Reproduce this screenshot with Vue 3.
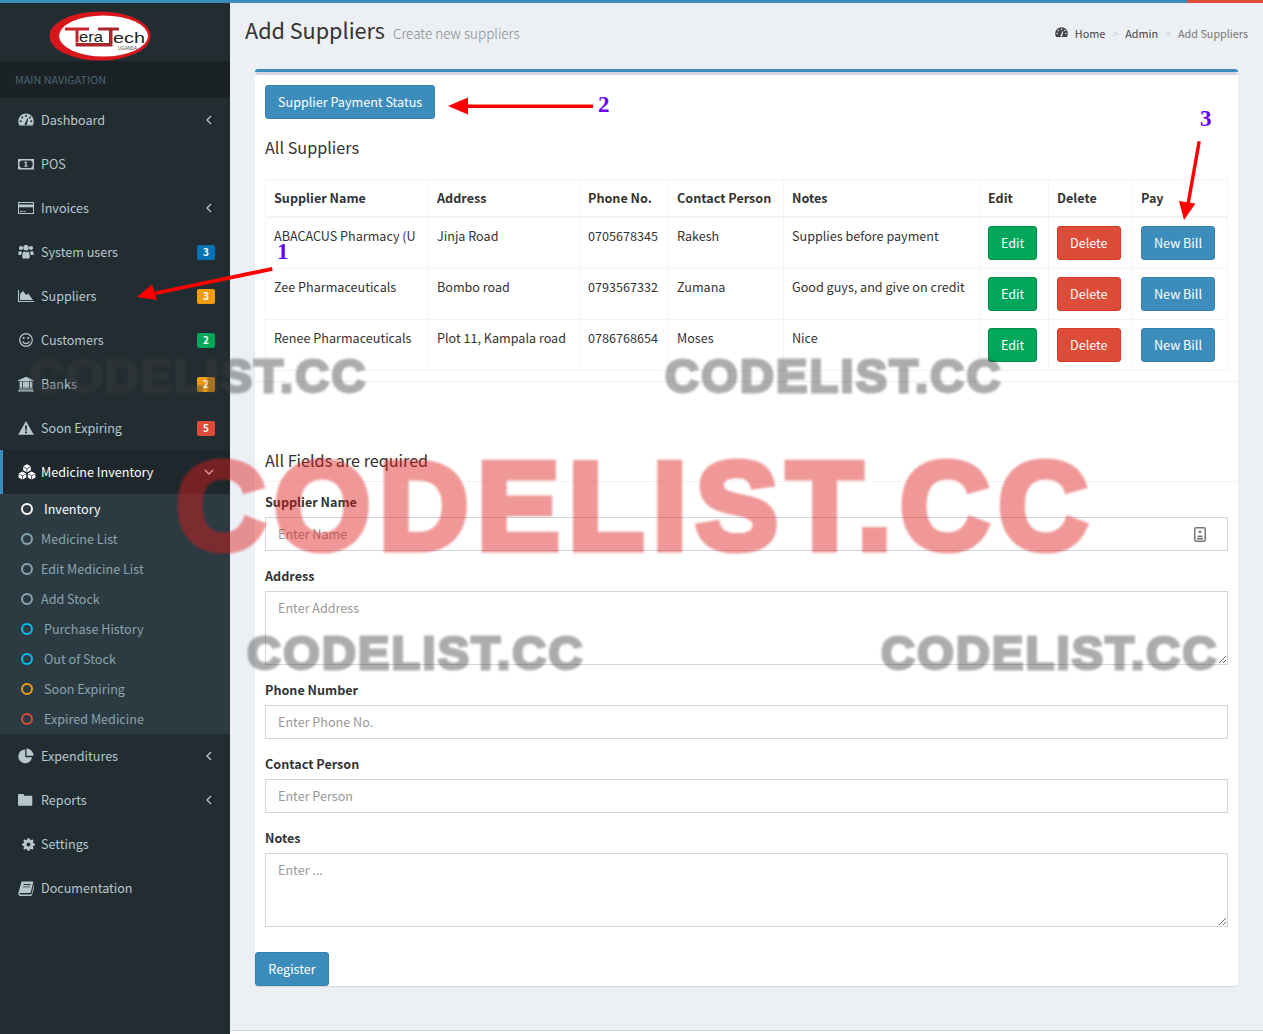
<script setup>
const circle = (x, y, r) => `M${x - r} ${y}a${r} ${r} 0 1 0 ${2 * r} 0a${r} ${r} 0 1 0 ${-2 * r} 0z`

const gear = (cx, cy, outer, inner, hole) => {
  const pts = []
  for (let i = 0; i < 8; i++) {
    const a = (i * Math.PI) / 4
    for (const [off, rad] of [[-0.3, inner], [-0.17, outer], [0.17, outer], [0.3, inner]]) {
      pts.push(`${(cx + rad * Math.cos(a + off)).toFixed(2)} ${(cy + rad * Math.sin(a + off)).toFixed(2)}`)
    }
  }
  return `M${pts.join('L')}z${circle(cx, cy, hole)}`
}

const cube = (x, y, s) => {
  const w = s * 0.95
  const h = s * 0.5
  return `M${x} ${y - s}L${x + w} ${y - s + h}L${x} ${y}L${x - w} ${y - s + h}z` +
    `M${x - w} ${y - s + h + 0.7}L${x - 0.35} ${y + 0.5}V${y + s}L${x - w} ${y + s - h}z` +
    `M${x + w} ${y - s + h + 0.7}L${x + 0.35} ${y + 0.5}V${y + s}L${x + w} ${y + s - h}z`
}

const icons = {
  dashboard: 'M8 1.500A7.800 7.800 0 0 0 .2 9.300c0 1.500.4 3 1.200 4.200h13.200c.8-1.200 1.200-2.700 1.200-4.200A7.800 7.800 0 0 0 8 1.500z' +
    circle(2.7, 9.3, 1) + circle(4.2, 5.6, 1) + circle(8, 4, 1) + circle(12, 5.6, 1) + circle(13.3, 9.3, 1) +
    'M6.800 11.800l2.600-5.600.9.4-1.600 6.400h-1.900z',
  pos: 'M0 3h16v10.400H0zM3 4.400h10l1.600 2v3.600l-1.600 2H3l-1.600-2V6.400zM7 5.600h1.700v4.200h1v1H6.200v-1h1V7H6.200z',
  card: 'M0 2h16v12H0zM1 3v1.600h14V3zM1 7.200V13h14V7.200zM2 11h2.600v1H2zM5.400 11h2v1h-2z',
  users: circle(3, 4, 2.1) + circle(13, 4, 2.1) + circle(8, 3.8, 2.7) +
    'M.2 10.500c0-2 .7-3.600 2-3.600.5.7 1.200 1 2 1-.6.8-.9 1.700-.9 3H1.200c-.6 0-1-.1-1-.4zM15.800 10.500c0-2-.7-3.600-2-3.600-.5.7-1.200 1-2 1 .6.8.9 1.700.9 3h2.100c.6 0 1-.1 1-.4zM4.200 13c0-3.200.8-5.600 2-5.600.5.5 1.100.8 1.800.8s1.300-.3 1.800-.8c1.200 0 2 2.400 2 5.600 0 1-.7 1.500-1.600 1.500H5.800c-.9 0-1.600-.5-1.600-1.500z',
  area: 'M0 2h1v11h15v1H0zM2 12V6l3-3 3.200 4 2-1.600L15 12z',
  smile: circle(8, 8, 6.9) + circle(8, 8, 5.7) + circle(5.7, 6, 1) + circle(10.3, 6, 1) +
    'M4.200 9.400l1-.3c.5 1.300 1.600 2 2.800 2s2.300-.7 2.800-2l1 .3c-.6 1.800-2.100 2.800-3.800 2.800s-3.200-1-3.800-2.800z',
  bank: 'M8 .8l7.800 3.400v1H.2v-1zM1.600 5.800H4v6H1.600zM4.800 5.800h2v6h-2zM9.200 5.800h2v6h-2zM12 5.800h2.400v6H12zM6.900 5.800h2.200v6H6.900zM1 12.400h14v1.200H1zM.2 14.200h15.600v1.300H.2z',
  warning: 'M8 1l7.800 13.800H.2zM7 5.600l.3 5h1.400l.3-5zM7 11.500v1.800h2v-1.800z',
  cubes: cube(9, 4.2, 4) + cube(4.4, 11.4, 4) + cube(13.6, 11.4, 4),
  pie: 'M7.200 1.400A6.900 6.900 0 1 0 14 9.200H7.200zM8.500 .6v7.200h7.100A7.200 7.200 0 0 0 8.500 .6z',
  folder: 'M0 3.400c0-.8.5-1.300 1.300-1.300h3.400c.8 0 1.300.5 1.300 1.300v.4h7c.8 0 1.300.5 1.300 1.300v7.400c0 .8-.5 1.300-1.300 1.300H1.300c-.8 0-1.300-.5-1.300-1.300z',
  gear: gear(8, 8, 7.9, 6, 2.4),
  book: 'M3.600 1.400h10.800c.6 0 .9.4.8 1l-2.400 9.500c-.2.8-.7 1.200-1.500 1.200H2.400c-.6 0-.9.3-.9.7s.4.7.9.7h10.400c.4 0 .6-.2.7-.5l2.300-9 .7.5-2.400 9.200c-.2.9-.8 1.300-1.600 1.300H2.200C1 15.500 0 14.700.3 13.200zM5.600 4l-.2.9h7.200l.2-.9zM5 6.400l-.2.9H12l.2-.9z',
}

const navTop = [
  { label: 'Dashboard', icon: 'dashboard', arrow: true },
  { label: 'POS', icon: 'pos' },
  { label: 'Invoices', icon: 'card', arrow: true },
  { label: 'System users', icon: 'users', badge: 3, color: '#0073b7' },
  { label: 'Suppliers', icon: 'area', badge: 3, color: '#f39c12' },
  { label: 'Customers', icon: 'smile', badge: 2, color: '#00a65a' },
  { label: 'Banks', icon: 'bank', badge: 2, color: '#f39c12' },
  { label: 'Soon Expiring', icon: 'warning', badge: 5, color: '#dd4b39' },
]

const subNav = [
  { label: 'Inventory', ring: '#ffffff', wide: true, active: true },
  { label: 'Medicine List', ring: '#8aa4af' },
  { label: 'Edit Medicine List', ring: '#8aa4af' },
  { label: 'Add Stock', ring: '#8aa4af' },
  { label: 'Purchase History', ring: '#00c0ef', wide: true },
  { label: 'Out of Stock', ring: '#00c0ef', wide: true },
  { label: 'Soon Expiring', ring: '#f39c12', wide: true },
  { label: 'Expired Medicine', ring: '#dd4b39', wide: true },
]

const navBottom = [
  { label: 'Expenditures', icon: 'pie', arrow: true },
  { label: 'Reports', icon: 'folder', arrow: true },
  { label: 'Settings', icon: 'gear', small: true },
  { label: 'Documentation', icon: 'book' },
]

const suppliers = [
  { name: 'ABACACUS Pharmacy (U', address: 'Jinja Road', phone: '0705678345', person: 'Rakesh', notes: 'Supplies before payment' },
  { name: 'Zee Pharmaceuticals', address: 'Bombo road', phone: '0793567332', person: 'Zumana', notes: 'Good guys, and give on credit' },
  { name: 'Renee Pharmaceuticals', address: 'Plot 11, Kampala road', phone: '0786768654', person: 'Moses', notes: 'Nice' },
]

const columns = [
  ['Supplier Name', 163], ['Address', 151], ['Phone No.', 89], ['Contact Person', 115],
  ['Notes', 196], ['Edit', 69], ['Delete', 84], ['Pay', 95],
]

const greyMarks = [
  { left: 30, top: 352 },
  { left: 665, top: 352 },
  { left: 247, top: 629 },
  { left: 881, top: 629 },
]
</script>

<template>
  <div class="page">
    <div class="topbar"><span class="topbar-end"></span></div>
    <div class="shell">
      <aside class="sidebar">
        <div class="logo">
          <svg width="230" height="58" viewBox="0 3 230 58">
            <ellipse cx="100" cy="36" rx="50.500" ry="24.500" fill="#d9161c" />
            <ellipse cx="103.500" cy="36" rx="44.500" ry="20.500" fill="#fff" />
            <path d="M65 27.500h24v3H78.500v12h-3V30.500H65z" fill="#c8232a" />
            <path d="M75.500 43h33.500V30.500H98V27.500h21v3H112.500V46.500H75.500z" fill="#a8262c" />
            <text x="79" y="42" class="logo-word" textLength="24" lengthAdjust="spacingAndGlyphs">era</text>
            <text x="113" y="43" class="logo-word" textLength="32" lengthAdjust="spacingAndGlyphs">ech</text>
            <text x="118" y="50" class="logo-small" textLength="19" lengthAdjust="spacingAndGlyphs">UGANDA</text>
          </svg>
        </div>
        <div class="nav-header">MAIN NAVIGATION</div>
        <a v-for="item in navTop" :key="item.label" class="nav-item">
          <svg class="nav-icon" viewBox="0 0 16 16"><path :d="icons[item.icon]" fill-rule="evenodd" /></svg>
          <span>{{ item.label }}</span>
          <svg v-if="item.arrow" class="chevron" viewBox="0 0 8 10"><path d="M6 1L2 5l4 4" /></svg>
          <span v-if="item.badge" class="badge" :style="{ background: item.color }">{{ item.badge }}</span>
        </a>
        <a class="nav-item active">
          <svg class="nav-icon cubes" viewBox="0 0 18 16"><path :d="icons.cubes" /></svg>
          <span>Medicine Inventory</span>
          <svg class="chevron down" viewBox="0 0 10 8"><path d="M1 2l4 4 4-4" /></svg>
        </a>
        <div class="subnav">
          <a v-for="sub in subNav" :key="sub.label" class="sub-item" :class="{ wide: sub.wide, on: sub.active }">
            <i class="ring" :style="{ borderColor: sub.ring }"></i>
            <span>{{ sub.label }}</span>
          </a>
        </div>
        <a v-for="item in navBottom" :key="item.label" class="nav-item">
          <svg class="nav-icon" :class="{ small: item.small }" viewBox="0 0 16 16"><path :d="icons[item.icon]" fill-rule="evenodd" /></svg>
          <span>{{ item.label }}</span>
          <svg v-if="item.arrow" class="chevron" viewBox="0 0 8 10"><path d="M6 1L2 5l4 4" /></svg>
        </a>
      </aside>

      <main class="main">
        <header class="content-header">
          <h1>Add Suppliers</h1>
          <small>Create new suppliers</small>
          <nav class="crumbs">
            <svg class="crumb-icon" viewBox="0 0 16 16"><path :d="icons.dashboard" fill-rule="evenodd" /></svg>
            <span>Home</span><em>&gt;</em><span>Admin</span><em>&gt;</em><span class="last">Add Suppliers</span>
          </nav>
        </header>

        <section class="card">
          <div class="inner-box">
            <button class="btn blue">Supplier Payment Status</button>
            <h3 class="list-title">All Suppliers</h3>
            <table>
              <colgroup>
                <col v-for="col in columns" :key="col[0]" :style="{ width: col[1] + 'px' }" />
              </colgroup>
              <thead>
                <tr><th v-for="col in columns" :key="col[0]">{{ col[0] }}</th></tr>
              </thead>
              <tbody>
                <tr v-for="row in suppliers" :key="row.name">
                  <td>{{ row.name }}</td>
                  <td>{{ row.address }}</td>
                  <td>{{ row.phone }}</td>
                  <td>{{ row.person }}</td>
                  <td>{{ row.notes }}</td>
                  <td><button class="btn green">Edit</button></td>
                  <td><button class="btn red">Delete</button></td>
                  <td><button class="btn blue">New Bill</button></td>
                </tr>
              </tbody>
            </table>
          </div>

          <h3 class="form-title">All Fields are required</h3>
          <form class="form" @submit.prevent>
            <label>Supplier Name</label>
            <div class="with-icon">
              <input type="text" placeholder="Enter Name" />
              <svg class="field-icon" viewBox="0 0 12 15">
                <rect x=".75" y=".75" width="10.500" height="13.500" rx="1.500" />
                <circle cx="6" cy="5" r="1.400" class="solid" />
                <path d="M3.500 8.500h5v1.800h-5z" class="solid" />
                <path d="M3 11.800h6" />
              </svg>
            </div>
            <label>Address</label>
            <textarea placeholder="Enter Address"></textarea>
            <label>Phone Number</label>
            <input type="text" placeholder="Enter Phone No." />
            <label>Contact Person</label>
            <input type="text" placeholder="Enter Person" />
            <label>Notes</label>
            <textarea placeholder="Enter ..."></textarea>
          </form>
          <button class="btn blue register">Register</button>
        </section>
        <div class="footer-line"></div>
      </main>
    </div>

    <!-- annotations and watermarks lying over the whole shot -->
    <svg class="arrows" width="1263" height="1034">
      <g fill="#ff0000">
        <path d="M272 267L155 291.500l.7 3.600L272.700 270.800z" />
        <path d="M137 297l15-12.500 5 15.500z" />
        <path d="M466 104.500h127v3.500H466z" />
        <path d="M448 106l20-8.500v17z" />
        <path d="M1197.500 141l-11 62 3.400.6 11-62z" />
        <path d="M1184 220l-5-19 16.500 2.500z" />
      </g>
      <g class="numbers">
        <text x="277" y="259">1</text>
        <text x="598" y="112">2</text>
        <text x="1200" y="126">3</text>
      </g>
    </svg>
    <span class="mark-red">CODELIST.CC</span>
    <span
      v-for="mark in greyMarks"
      :key="mark.left"
      class="mark-grey"
      :style="{ left: mark.left + 'px', top: mark.top + 'px' }"
    >CODELIST.CC</span>
  </div>
</template>

<style scoped>
.page {
  position: relative;
  width: 1263px;
  height: 1034px;
  overflow: hidden;
  display: flex;
  flex-direction: column;
  font-family: "Noto Sans CJK SC", "Noto Sans", sans-serif;
  font-size: 12.600px;
  line-height: 20px;
  color: #333;
  background: #ecf0f5;
}

.topbar {
  height: 3px;
  flex: none;
  display: flex;
  justify-content: flex-end;
  background: #3c8dbc;
}

.topbar-end {
  width: 76px;
  background: #dd4b39;
}

.shell {
  flex: 1;
  display: flex;
  min-height: 0;
}

.sidebar {
  width: 230px;
  flex: none;
  background: #222d32;
  color: #b8c7ce;
}

.logo {
  height: 58px;
}

.logo svg {
  display: block;
}

.logo-word {
  font-family: "Liberation Sans", sans-serif;
  font-size: 15px;
  fill: #222;
}

.logo-small {
  font-family: "Liberation Sans", sans-serif;
  font-size: 4.500px;
  fill: #444;
}

.nav-header {
  height: 37px;
  padding-left: 15px;
  line-height: 36px;
  font-size: 10.800px;
  color: #4b646f;
  background: #1a2226;
}

.nav-item {
  height: 44px;
  display: flex;
  align-items: center;
  padding: 0 15px 0 18px;
}

.nav-icon {
  width: 16px;
  height: 16px;
  margin-right: 7px;
  flex: none;
  fill: currentColor;
}

.nav-icon.cubes {
  width: 18px;
  margin-right: 5px;
  color: #fff;
}

.nav-icon.small {
  width: 13px;
  height: 13px;
  margin-left: 4px;
  margin-right: 6px;
}

.chevron {
  width: 8px;
  height: 10px;
  margin-left: auto;
  margin-right: 2px;
  fill: none;
  stroke: currentColor;
  stroke-width: 1.300;
}

.chevron.down {
  width: 10px;
  height: 8px;
  margin-right: 1px;
}

.badge {
  margin-left: auto;
  width: 18px;
  height: 15px;
  border-radius: 2px;
  text-align: center;
  font-size: 10px;
  font-weight: 700;
  line-height: 14px;
  color: #fff;
}

.nav-item.active {
  padding-left: 15px;
  border-left: 3px solid #3c8dbc;
  background: #1e282c;
  color: #fff;
}

.subnav {
  padding-left: 1px;
  background: #2c3b41;
}

.sub-item {
  height: 30px;
  display: flex;
  align-items: center;
  padding-left: 20px;
  color: #8aa4af;
}

.sub-item.on {
  color: #fff;
}

.ring {
  width: 12px;
  height: 12px;
  box-sizing: border-box;
  margin-right: 8px;
  border: 2.200px solid;
  border-radius: 50%;
}

.sub-item.wide .ring {
  margin-right: 11px;
}

.main {
  flex: 1;
  min-width: 0;
  display: flex;
  flex-direction: column;
}

.content-header {
  height: 66px;
  flex: none;
  box-sizing: border-box;
  display: flex;
  align-items: baseline;
  padding: 12px 15px 0;
}

.content-header h1 {
  margin: 0;
  font-size: 21.600px;
  font-weight: 400;
  line-height: 30px;
  color: #333;
}

.content-header small {
  margin-left: 8px;
  font-size: 13.500px;
  font-weight: 300;
  color: #888;
}

.crumbs {
  margin-left: auto;
  display: flex;
  align-items: center;
  font-size: 10.800px;
  color: #444;
}

.crumbs em {
  margin: 0 7px;
  font-style: normal;
  color: #ccc;
}

.crumbs .last {
  color: #777;
}

.crumb-icon {
  width: 13px;
  height: 13px;
  margin-right: 7px;
  fill: currentColor;
}

.card {
  margin: 0 25px;
  flex: none;
  height: 917px;
  box-sizing: border-box;
  border-top: 3px solid #3c8dbc;
  border-radius: 3px;
  background: #fff;
  box-shadow: 0 1px 1px rgba(0, 0, 0, 0.1);
}

.inner-box {
  box-sizing: border-box;
  height: 310px;
  padding: 10px;
  border-top: 3px solid #d2d6de;
  border-bottom: 1px solid #eeeeee;
  border-radius: 3px;
}

.btn {
  display: inline-block;
  height: 34px;
  box-sizing: border-box;
  padding: 0 12px;
  border: 1px solid;
  border-radius: 3px;
  font-family: inherit;
  font-size: 12.600px;
  line-height: 32px;
  color: #fff;
  vertical-align: top;
}

.btn.blue {
  background: #3c8dbc;
  border-color: #367fa9;
}

.btn.green {
  background: #00a65a;
  border-color: #008d4c;
}

.btn.red {
  background: #dd4b39;
  border-color: #d73925;
}

.list-title,
.form-title {
  margin: 0;
  font-size: 16.200px;
  font-weight: 400;
  line-height: 20px;
}

.list-title {
  margin: 18px 0 22px;
}

table {
  width: 962px;
  table-layout: fixed;
  border-collapse: collapse;
}

th,
td {
  padding: 8px;
  border: 1px solid #f4f4f4;
  text-align: left;
  vertical-align: top;
  white-space: nowrap;
  overflow: hidden;
}

th {
  border-bottom-width: 2px;
  font-weight: 700;
}

.form-title {
  height: 100px;
  box-sizing: border-box;
  padding: 68px 10px 0;
  border-bottom: 1px solid #f4f4f4;
}

.form {
  padding: 10px 10px 10px;
}

label {
  display: block;
  margin-bottom: 5px;
  font-weight: 700;
}

input,
textarea {
  display: block;
  width: 100%;
  box-sizing: border-box;
  margin: 0 0 15px;
  padding: 6px 12px;
  border: 1px solid #d2d6de;
  border-radius: 0;
  outline: none;
  background: #fff;
  font-family: inherit;
  font-size: 12.600px;
  line-height: 20px;
  color: #555;
}

input {
  height: 34px;
  padding: 5px 12px 7px;
}

textarea {
  height: 74px;
}

input::placeholder,
textarea::placeholder {
  color: #999;
  opacity: 1;
}

.with-icon {
  position: relative;
}

.field-icon {
  position: absolute;
  top: 10px;
  right: 22px;
  width: 12px;
  height: 15px;
  fill: none;
  stroke: #777;
  stroke-width: 1.500;
}

.field-icon .solid {
  fill: #777;
  stroke: none;
}

.register {
  display: block;
  width: 74px;
}

.footer-line {
  margin-top: 44px;
  flex: 1;
  border-top: 1px solid #d2d6de;
  background: #fff;
}

.arrows {
  position: absolute;
  top: 0;
  left: 0;
  pointer-events: none;
}

.numbers text {
  font-family: "Liberation Serif", serif;
  font-size: 23px;
  font-weight: 700;
  fill: #6600ff;
}

.mark-red,
.mark-grey {
  position: absolute;
  font-family: "Liberation Sans", sans-serif;
  font-weight: 700;
  line-height: 1;
  white-space: nowrap;
  pointer-events: none;
}

.mark-red {
  left: 176px;
  top: 444px;
  font-size: 124px;
  letter-spacing: 8.500px;
  color: #de1b1b;
  -webkit-text-stroke: 7px #de1b1b;
  opacity: 0.45;
  filter: blur(1px);
}

.mark-grey {
  font-size: 47px;
  letter-spacing: 2.200px;
  color: #3c3c3c;
  -webkit-text-stroke: 3px #3c3c3c;
  opacity: 0.42;
  filter: blur(1.200px);
}
</style>
